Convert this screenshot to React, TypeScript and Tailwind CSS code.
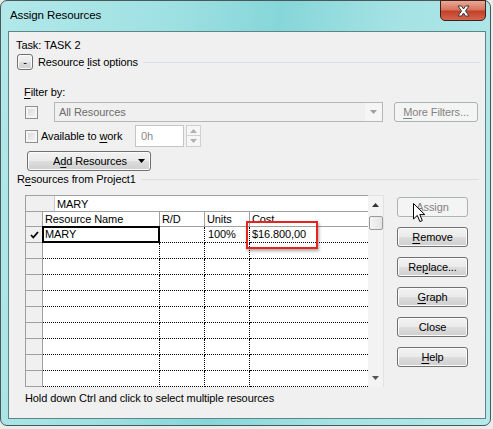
import React from 'react';

const btnBase =
  'flex items-center justify-center rounded-[3px] border text-[11px] leading-none';
const btnOn =
  'border-[#707070] text-black bg-[linear-gradient(180deg,#f2f2f2_0%,#ebebeb_48%,#dddddd_52%,#cfcfcf_100%)] shadow-[inset_0_0_0_1px_#fbfbfb]';
const btnOff = 'border-[#adb2b5] text-[#838383] bg-[#f4f4f4]';

function U({ children }: { children: React.ReactNode }) {
  return <span className="underline underline-offset-[2px] decoration-1">{children}</span>;
}

function Btn({
  children,
  disabled,
  className = '',
}: {
  children: React.ReactNode;
  disabled?: boolean;
  className?: string;
}) {
  return <div className={`${btnBase} ${disabled ? btnOff : btnOn} ${className}`}>{children}</div>;
}

function CheckBox() {
  return (
    <div className="w-[13px] h-[13px] border border-[#8f8f8f] bg-[#f4f4f4] p-[2px]">
      <div className="w-full h-full bg-[linear-gradient(135deg,#dcdcdc,#f2f2f2)]" />
    </div>
  );
}

function Tri({ down = true, color = '#5a5a5a' }: { down?: boolean; color?: string }) {
  return (
    <svg width="7" height="4" viewBox="0 0 7 4">
      <path d={down ? 'M0 0 L7 0 L3.5 4 Z' : 'M0 4 L7 4 L3.5 0 Z'} fill={color} />
    </svg>
  );
}

const cols = [
  { name: 'Resource Name', w: 'w-[117px]' },
  { name: 'R/D', w: 'w-[45px]' },
  { name: 'Units', w: 'w-[45px]' },
  { name: 'Cost', w: 'w-[118px]' },
];

function Grid() {
  const rows = Array.from({ length: 10 }, (_, i) => i);
  return (
    <div className="relative flex w-[359px] h-[192px]">
      <div className="w-[343px] border-l border-t border-[#a0a0a0] flex flex-col bg-white">
        {/* edit bar */}
        <div className="flex h-[16px] border-b border-[#a0a0a0]">
          <div className="w-[29px] bg-[#f0f0f0] border-r border-[#c8c8c8]" />
          <div className="flex-1 pl-[2px] leading-[16px]">MARY</div>
        </div>
        {/* header */}
        <div className="flex h-[15px] border-b border-[#a0a0a0]">
          <div className="w-[17px] bg-[#f0f0f0] border-r border-[#a0a0a0]" />
          {cols.map((c, i) => (
            <div
              key={c.name}
              className={`${c.w} pl-[2px] leading-[14px] ${i < 3 ? 'border-r border-[#a0a0a0]' : ''}`}
            >
              {c.name}
            </div>
          ))}
        </div>
        {rows.map((r) => (
          <div key={r} className="flex h-[16px]">
            <div className="w-[17px] bg-[#f0f0f0] border-r border-b border-[#a0a0a0] flex items-center justify-center">
              {r === 0 && (
                <svg width="9" height="8" viewBox="0 0 9 8">
                  <path d="M1 4 L3.3 6.5 L8 1" stroke="#000" strokeWidth="1.8" fill="none" />
                </svg>
              )}
            </div>
            {cols.map((c, i) => (
              <div
                key={c.name}
                className={`${c.w} relative border-b border-dotted border-black leading-[15px] pl-[2px] ${
                  i < 3 ? 'border-r' : ''
                }`}
              >
                {r === 0 && i === 0 && (
                  <>
                    <div className="absolute left-[-1px] top-[-1px] w-[118px] h-[17px] border-2 border-black" />
                    <span>MARY</span>
                  </>
                )}
                {r === 0 && i === 2 && <span className="pl-[1px]">100%</span>}
                {r === 0 && i === 3 && <span>$16.800,00</span>}
              </div>
            ))}
          </div>
        ))}
      </div>
      {/* scrollbar */}
      <div className="w-[16px] bg-[#f3f3f3] border-t border-r border-[#e2e2e2] flex flex-col items-center">
        <div className="h-[18px] flex items-center justify-center">
          <Tri down={false} color="#333" />
        </div>
        <div className="w-[14px] h-[14px] mt-[2px] rounded-[2px] border border-[#9a9a9a] bg-[linear-gradient(90deg,#f5f5f5,#e4e4e4)]" />
        <div className="flex-1" />
        <div className="h-[18px] flex items-center justify-center">
          <Tri color="#555" />
        </div>
      </div>
      {/* highlight box */}
      <div className="absolute left-[221px] top-[26px] w-[72px] h-[28px] border-2 border-[#e8231d] shadow-[1px_2px_3px_rgba(0,0,0,0.35)]" />
    </div>
  );
}

export default function App() {
  return (
    <div className="w-[493px] h-[429px] bg-[#ebebeb] font-['Liberation_Sans',Arial,sans-serif] text-[11px] tracking-[-0.1px] text-black">
      <div className="relative w-[491px] h-[426px] rounded-[7px] border border-[#4b5859] bg-[linear-gradient(100deg,#b2e8ea_0%,#9fe1e3_30%,#86d6d9_50%,#a3e2e4_70%,#b6e9eb_100%)] flex flex-col pl-[7px] pr-[4px] pb-[6px]">
        {/* title bar */}
        <div className="h-[30px] flex items-center pl-[2px] text-[11.5px]">Assign Resources</div>
        <div className="absolute top-[-1px] right-[4px] w-[46px] h-[21px] rounded-b-[5px] border border-[#40201a] bg-[linear-gradient(180deg,#e9a997_0%,#d7755f_45%,#c3412a_55%,#d4664c_100%)] flex items-center justify-center">
          <svg width="15" height="12" viewBox="0 0 15 12">
            <path
              d="M2 1 L5.5 1 L7.5 4 L9.5 1 L13 1 L9.5 6 L13 11 L9.5 11 L7.5 8 L5.5 11 L2 11 L5.5 6 Z"
              fill="#fff"
              stroke="#3a3a3a"
              strokeWidth="1"
            />
          </svg>
        </div>

        {/* client */}
        <div className="flex-1 border border-[#5f8486] bg-[#f0f0f0] flex flex-col">
          <div className="mt-[5px] h-[16px] leading-[16px] ml-[7px]">Task: TASK 2</div>

          <div className="mt-[1px] h-[16px] flex items-center">
            <Btn className="ml-[8px] w-[16px] h-[16px] text-[10px]">-</Btn>
            <span className="ml-[5px]">
              Resource <U>l</U>ist options
            </span>
            <div className="flex-1 ml-[5px] mr-[5px] h-px bg-[#d5dfe5]" />
          </div>

          <div className="mt-[14px] h-[16px] leading-[16px] ml-[15px]">
            <U>F</U>ilter by:
          </div>

          <div className="mt-[2px] h-[20px] flex items-center">
            <div className="ml-[16px]">
              <CheckBox />
            </div>
            <div className="ml-[16px] w-[329px] h-[20px] border border-[#b7b7b7] bg-[#f0f0f0] flex">
              <div className="flex-1 pl-[4px] leading-[18px] text-[#6d6d6d]">All Resources</div>
              <div className="w-[17px] bg-[#f5f5f5] flex items-center justify-center">
                <Tri color="#a0a0a0" />
              </div>
            </div>
            <Btn disabled className="ml-[11px] w-[84px] h-[20px]">
              <span>
                <U>M</U>ore Filters...
              </span>
            </Btn>
          </div>

          <div className="mt-[3px] h-[22px] flex items-center">
            <div className="ml-[16px]">
              <CheckBox />
            </div>
            <div className="ml-[3px] w-[94px]">
              Available to <U>w</U>ork
            </div>
            <div className="w-[49px] h-[22px] border border-[#c5c5c5] bg-white pl-[5px] leading-[20px] text-[#8a8a8a]">
              0h
            </div>
            <div className="ml-[2px] w-[15px] h-[22px] flex flex-col">
              <div className="h-[11px] border border-[#d0d0d0] bg-[#f6f6f6] flex items-center justify-center">
                <Tri down={false} color="#b0b0b0" />
              </div>
              <div className="h-[11px] border border-t-0 border-[#d0d0d0] bg-[#f6f6f6] flex items-center justify-center">
                <Tri color="#b0b0b0" />
              </div>
            </div>
          </div>

          <Btn className="mt-[4px] ml-[18px] w-[124px] h-[20px] !justify-between pl-[25px] pr-[5px]">
            <span>
              A<U>d</U>d Resources
            </span>
            <Tri color="#000" />
          </Btn>

          <div className="h-[16px] flex items-center">
            <span className="ml-[8px]">
              R<U>e</U>sources from Project1
            </span>
            <div className="flex-1 ml-[5px] mr-[6px] h-px bg-[#d5dfe5]" />
          </div>

          <div className="mt-[8px] h-[192px] flex">
            <div className="ml-[16px]">
              <Grid />
            </div>
            <div className="relative ml-[13px] mt-[2px] flex flex-col gap-[10px]">
              <Btn disabled className="w-[71px] h-[20px]">
                <span>
                  <U>A</U>ssign
                </span>
              </Btn>
              <Btn className="w-[71px] h-[20px]">
                <span>
                  <U>R</U>emove
                </span>
              </Btn>
              <Btn className="w-[71px] h-[20px]">
                <span>
                  Re<U>p</U>lace...
                </span>
              </Btn>
              <Btn className="w-[71px] h-[20px]">
                <span>
                  <U>G</U>raph
                </span>
              </Btn>
              <Btn className="w-[71px] h-[20px]">Close</Btn>
              <Btn className="w-[71px] h-[20px]">
                <span>
                  <U>H</U>elp
                </span>
              </Btn>
              {/* mouse cursor */}
              <svg
                className="absolute left-[16px] top-[6px]"
                width="13"
                height="20"
                viewBox="0 0 13 20"
              >
                <path
                  d="M0.5 0.5 L0.5 16 L4.3 12.4 L6.9 18.6 L9.3 17.6 L6.8 11.6 L11.8 11.6 Z"
                  fill="#fff"
                  stroke="#000"
                  strokeWidth="1"
                  strokeLinejoin="round"
                />
              </svg>
            </div>
          </div>

          <div className="mt-[3px] h-[16px] leading-[16px] ml-[16px]">
            Hold down Ctrl and click to select multiple resources
          </div>
        </div>
      </div>
    </div>
  );
}
